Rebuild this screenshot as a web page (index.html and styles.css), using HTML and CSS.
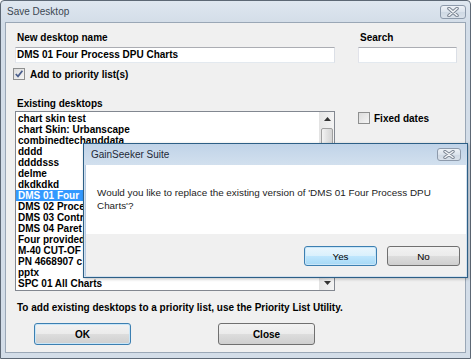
FILE: index.html
```html
<!DOCTYPE html>
<html>
<head>
    <title>Save Desktop</title>
    <link rel="stylesheet" href="styles.css">
</head>
<body>
    <div class="window">
        <div class="titlebar">
            <span class="title">Save Desktop</span>
            <span class="close-btn">
                <svg width="12" height="10" viewBox="0 0 12 10">
                    <path d="M2 1.5 L10 8.5 M10 1.5 L2 8.5" stroke="#7b8593" stroke-width="3.6" stroke-linecap="round"/>
                    <path d="M2 1.5 L10 8.5 M10 1.5 L2 8.5" stroke="#f4f6f9" stroke-width="1.6" stroke-linecap="round"/>
                </svg>
            </span>
        </div>

        <div class="client">
            <div class="form">
                <div class="main-col">
                    <div class="lbl">New desktop name</div>
                    <div class="input">DMS 01 Four Process DPU Charts</div>
                    <div class="check">
                        <span class="box">
                            <svg width="10" height="10" viewBox="0 0 10 10">
                                <path d="M1.8 5 L4 7.4 L8.4 1.8" fill="none" stroke="#4a5e8c" stroke-width="1.7"/>
                            </svg>
                        </span>
                        Add to priority list(s)
                    </div>
                    <div class="lbl existing">Existing desktops</div>
                    <div class="listbox">
                        <ul class="items">
                            <li>chart skin test</li>
                            <li>chart Skin: Urbanscape</li>
                            <li>combinedtechanddata</li>
                            <li>dddd</li>
                            <li>ddddsss</li>
                            <li>delme</li>
                            <li>dkdkdkd</li>
                            <!-- rows are cut where the message box covers them -->
                            <li class="selected">DMS 01 Four</li>
                            <li>DMS 02 Proce</li>
                            <li>DMS 03 Contr</li>
                            <li>DMS 04 Paret</li>
                            <li>Four provided</li>
                            <li>M-40 CUT-OF</li>
                            <li>PN 4668907 c</li>
                            <li>pptx</li>
                            <li>SPC 01 All Charts</li>
                        </ul>
                        <div class="scrollbar">
                            <span class="arrow">
                                <svg width="7" height="4" viewBox="0 0 7 4"><path d="M0 4 L3.5 0 L7 4 Z" fill="#333"/></svg>
                            </span>
                            <span class="thumb"></span>
                            <span class="track"></span>
                            <span class="arrow">
                                <svg width="7" height="4" viewBox="0 0 7 4"><path d="M0 0 L3.5 4 L7 0 Z" fill="#333"/></svg>
                            </span>
                        </div>
                    </div>
                </div>

                <div class="side-col">
                    <div class="lbl">Search</div>
                    <div class="input"></div>
                    <div class="check fixed">
                        <span class="box"></span>
                        Fixed dates
                    </div>
                </div>
            </div>

            <p class="hint">To add existing desktops to a priority list, use the Priority List Utility.</p>

            <div class="buttons">
                <button class="btn default">OK</button>
                <button class="btn">Close</button>
            </div>
        </div>

        <!-- message box on top of the dialog -->
        <div class="msgbox">
            <div class="msg-title">
                <span class="msg-caption">GainSeeker Suite</span>
                <span class="close-btn small">
                    <svg width="12" height="9" viewBox="0 0 12 9">
                        <path d="M2 1.5 L10 7.5 M10 1.5 L2 7.5" stroke="#7b8593" stroke-width="3.4" stroke-linecap="round"/>
                        <path d="M2 1.5 L10 7.5 M10 1.5 L2 7.5" stroke="#f4f6f9" stroke-width="1.5" stroke-linecap="round"/>
                    </svg>
                </span>
            </div>
            <div class="msg-body">
                Would you like to replace the existing version of 'DMS 01 Four Process DPU<br>Charts'?
            </div>
            <div class="msg-buttons">
                <button class="btn msg default">Yes</button>
                <button class="btn msg">No</button>
            </div>
        </div>
    </div>
</body>
</html>
```

FILE: styles.css
```css
body {
    margin: 0;
    font-family: "Liberation Sans", Arial, sans-serif;
    background: #fff;
}
.window {
    position: relative;
    width: 471px;
    height: 359px;
    box-sizing: border-box;
    border: 1px solid #5d6875;
    border-radius: 4px 4px 0 0;
    background: linear-gradient(#dfe7f0, #d3dde8 22px, #d3dde8);
    display: flex;
    flex-direction: column;
}
.titlebar {
    height: 21px;
    display: flex;
    justify-content: space-between;
    align-items: flex-start;
}
.title {
    padding: 5px 0 0 6px;
    font-size: 10px;
    line-height: 12px;
    color: #3d4752;
}
.close-btn {
    margin: 4px 4px 0 0;
    width: 26px;
    height: 14px;
    box-sizing: border-box;
    border: 1px solid #8d9aab;
    border-radius: 3px;
    background: linear-gradient(#eef2f7, #dbe3ec 50%, #cfd9e4 51%, #d9e1ea);
    display: flex;
    align-items: center;
    justify-content: center;
}
.close-btn.small {
    margin: 4px 5px 0 0;
    width: 24px;
    height: 13px;
}
.client {
    flex: 1;
    margin: 0 4px 5px;
    border: 1px solid #9aa7b6;
    background: #f0f0f0;
    padding: 9px 0 0 9px;
    font-size: 10px;
    font-weight: bold;
    color: #000;
}
.form {
    display: flex;
    gap: 23px;
}
.main-col {
    width: 320px;
}
.side-col {
    width: 99px;
}
.lbl {
    height: 12px;
    line-height: 12px;
    padding-left: 2px;
    margin-bottom: 3px;
}
.lbl.existing {
    margin-top: 17px;
    margin-bottom: 1px;
}
.input {
    height: 16px;
    box-sizing: border-box;
    border: 1px solid;
    border-color: #abadb3 #dbdfe6 #e3e9ef #e2e3ea;
    background: #fff;
    padding-left: 1px;
    line-height: 14px;
    white-space: nowrap;
}
.check {
    display: flex;
    align-items: center;
    gap: 5px;
    height: 14px;
    margin: 4px 0 0 -2px;
}
.check.fixed {
    margin: 48px 0 0 0;
    gap: 4px;
}
.box {
    width: 12px;
    height: 12px;
    box-sizing: border-box;
    border: 1px solid #8e8f8f;
    background: linear-gradient(135deg, #dcdcdc, #f5f5f5);
    display: flex;
    align-items: center;
    justify-content: center;
}
.listbox {
    height: 180px;
    box-sizing: border-box;
    border: 1px solid #828790;
    background: #fff;
    display: flex;
}
.items {
    flex: 1;
    margin: 0;
    padding: 1px 0 0;
    list-style: none;
    overflow: hidden;
}
.items li {
    height: 11px;
    line-height: 11px;
    padding-left: 2px;
    white-space: nowrap;
}
.items li.selected {
    background: #3399ff;
    color: #fff;
}
.scrollbar {
    width: 14px;
    background: linear-gradient(90deg, #e6e6e6, #f4f4f4);
    border-left: 1px solid #e3e3e3;
    display: flex;
    flex-direction: column;
}
.arrow {
    height: 14px;
    display: flex;
    align-items: center;
    justify-content: center;
}
.thumb {
    margin: 2px 1px 0;
    height: 40px;
    border: 1px solid #a0a0a0;
    border-radius: 2px;
    background: linear-gradient(90deg, #f3f3f3, #e2e2e2 50%, #d4d4d4);
}
.track {
    flex: 1;
}
.hint {
    margin: 11px 0 0;
    padding-left: 2px;
    height: 12px;
    line-height: 12px;
}
.buttons {
    display: flex;
    gap: 87px;
    margin: 9px 0 0 19px;
}
.btn {
    width: 97px;
    height: 22px;
    padding: 0;
    border: 1px solid #707070;
    border-radius: 3px;
    background: linear-gradient(#f2f2f2, #ebebeb 50%, #dddddd 51%, #cfcfcf);
    font-family: "Liberation Sans", Arial, sans-serif;
    font-size: 10px;
    font-weight: bold;
    color: #000;
}
.btn.default {
    border-color: #3c7fb1;
    box-shadow: inset 0 0 0 1px #c9e6f8;
}
.msgbox {
    position: absolute;
    left: 82px;
    top: 142px;
    width: 385px;
    height: 135px;
    box-sizing: border-box;
    border: 1px solid #2d5f86;
    background: linear-gradient(#c0d3e8, #d2e0ee 21px, #d2e0ee);
    padding: 0 1px 1px;
    display: flex;
    flex-direction: column;
    box-shadow: 1px 1px 3px rgba(0, 0, 0, 0.25);
    font-weight: normal;
}
.msg-title {
    height: 21px;
    display: flex;
    justify-content: space-between;
    align-items: flex-start;
}
.msg-caption {
    padding: 5px 0 0 6px;
    font-size: 10px;
    line-height: 12px;
    color: #1e2a38;
}
.msg-body {
    height: 69px;
    box-sizing: border-box;
    background: #fff;
    border-left: 1px solid #b6cbe2;
    padding: 21px 0 0 11px;
    font-size: 9.9px;
    line-height: 13px;
    color: #1c1c1c;
    white-space: nowrap;
}
.msg-buttons {
    flex: 1;
    background: #f0f0f0;
    border-left: 1px solid #b6cbe2;
    display: flex;
    justify-content: flex-end;
    gap: 10px;
    padding: 12px 6px 0 0;
}
.btn.msg {
    width: 73px;
    height: 20px;
    font-weight: normal;
    font-size: 9.8px;
}
.btn.msg.default {
    background: linear-gradient(#eaf6fd, #d9f0fc 50%, #bee6fd 51%, #a7d9f5);
}
```
